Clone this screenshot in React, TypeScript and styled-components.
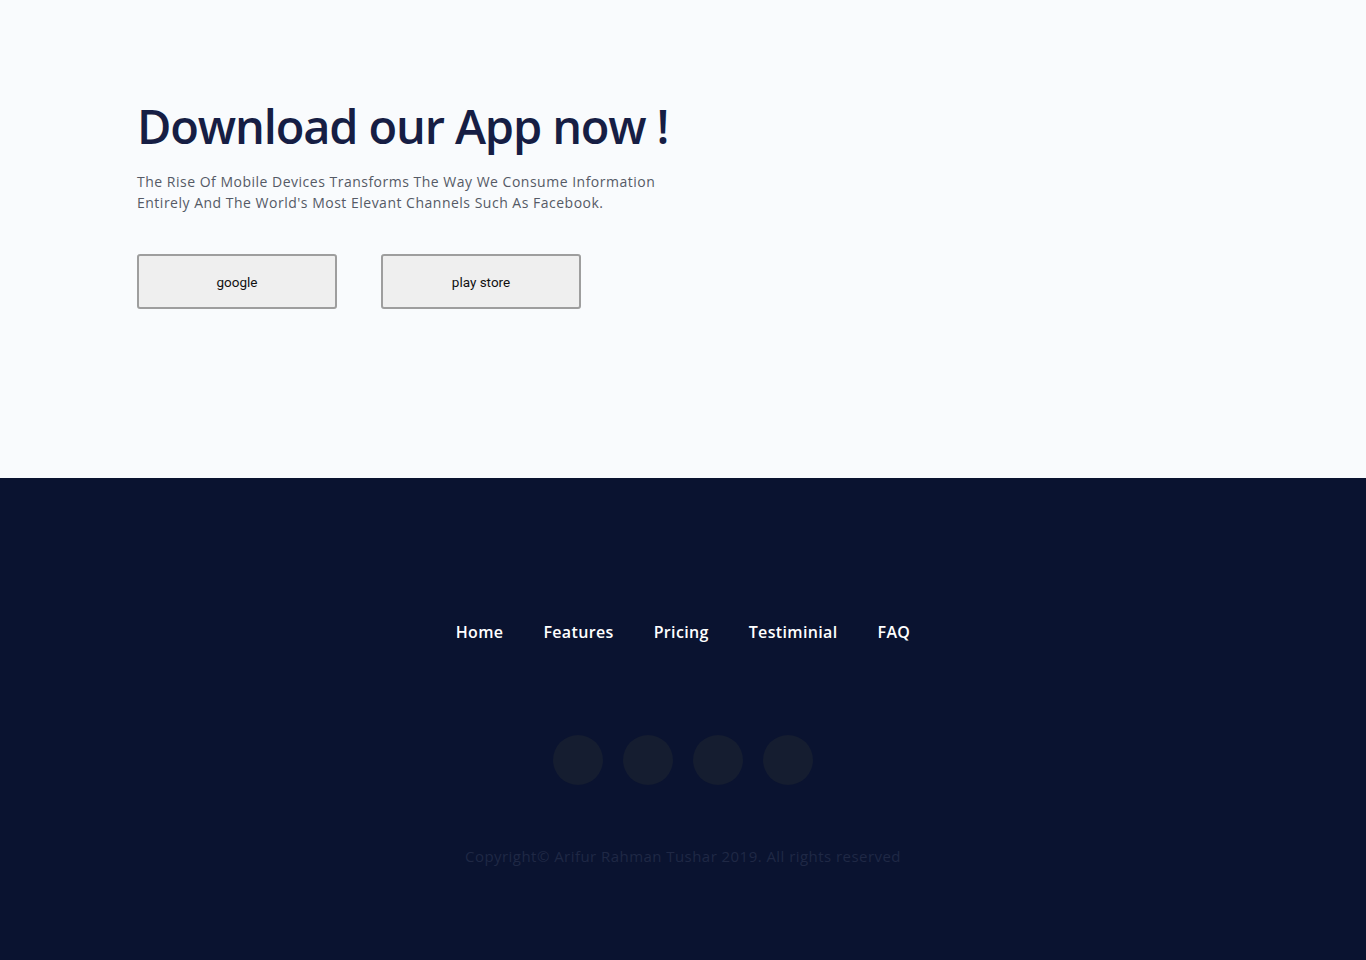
import React from "react";
import styled, { createGlobalStyle } from "styled-components";

const Global = createGlobalStyle`
  html, body { margin: 0; padding: 0; }
  body { background: #f9fbfd; font-family: "Open Sans", "Liberation Sans", sans-serif; }
`;

const Page = styled.div`
  display: flex;
  flex-direction: column;
  min-height: 960px;
`;

const Hero = styled.section`
  height: 478px;
  background: #f9fbfd;
  box-sizing: border-box;
  padding: 96px 0 0 137px;
`;

const Title = styled.h1`
  margin: 0;
  font-family: "Open Sans", sans-serif;
  font-weight: 600;
  font-size: 47px;
  line-height: 60px;
  letter-spacing: -1.15px;
  color: #161e44;
`;

const Lead = styled.p`
  margin: 15px 0 0;
  font-family: "Open Sans", sans-serif;
  font-size: 14px;
  line-height: 21px;
  letter-spacing: 0.5px;
  color: #555a66;
  max-width: 540px;
`;

const Buttons = styled.div`
  display: flex;
  gap: 44px;
  margin-top: 41px;
`;

const StoreButton = styled.button`
  width: 200px;
  height: 55px;
  background: #efefef;
  border: 2px solid #9e9e9e;
  border-radius: 3px;
  font-family: Roboto, "Liberation Sans", Arial, sans-serif;
  font-size: 13.5px;
  color: #111;
  padding: 0;
`;

const Footer = styled.footer`
  flex: 1;
  background: #0a1330;
  display: flex;
  flex-direction: column;
  align-items: center;
  padding-top: 140px;
`;

const Nav = styled.nav`
  display: flex;
  gap: 40px;
`;

const NavLink = styled.a`
  font-family: "Open Sans", sans-serif;
  font-weight: 600;
  font-size: 16px;
  line-height: 28px;
  letter-spacing: 0.35px;
  color: #ffffff;
  text-decoration: none;
`;

const Socials = styled.div`
  display: flex;
  gap: 20px;
  margin-top: 89px;
`;

const Circle = styled.span`
  width: 50px;
  height: 50px;
  border-radius: 50%;
  background: #151d30;
`;

const Copy = styled.p`
  margin: 61px 0 0;
  font-family: "Open Sans", sans-serif;
  font-size: 15px;
  line-height: 20px;
  letter-spacing: 0.45px;
  color: #1f2845;
`;

export default function App() {
  return (
    <Page>
      <Global />
      <Hero>
        <Title>Download our App now !</Title>
        <Lead>
          The Rise Of Mobile Devices Transforms The Way We Consume Information
          Entirely And The World's Most Elevant Channels Such As Facebook.
        </Lead>
        <Buttons>
          <StoreButton>google</StoreButton>
          <StoreButton>play store</StoreButton>
        </Buttons>
      </Hero>
      <Footer>
        <Nav>
          {["Home", "Features", "Pricing", "Testiminial", "FAQ"].map((t) => (
            <NavLink key={t} href="#">{t}</NavLink>
          ))}
        </Nav>
        <Socials>
          <Circle />
          <Circle />
          <Circle />
          <Circle />
        </Socials>
        <Copy>Copyright© Arifur Rahman Tushar 2019. All rights reserved</Copy>
      </Footer>
    </Page>
  );
}
